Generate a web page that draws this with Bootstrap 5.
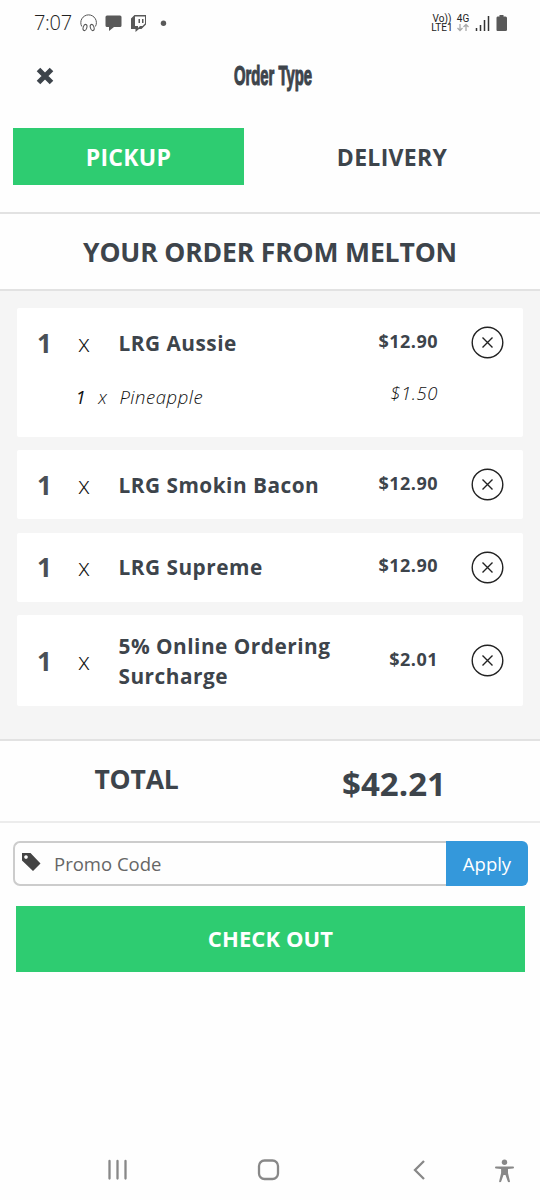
<!DOCTYPE html>
<html lang="en">
<head>
<meta charset="utf-8">
<meta name="viewport" content="width=device-width, initial-scale=1">
<title>Order Type</title>
<link href="https://cdn.jsdelivr.net/npm/bootstrap@5.3.0/dist/css/bootstrap.min.css" rel="stylesheet">
<style>
  body { font-family: "Open Sans", sans-serif; color: #3d444b; background: #fefefe; line-height: 30px; }
  .screen { height: 1200px; }
  .status { height: 45px; padding: 0 33px 0 34px; }
  .clock { font: 300 20px/45px "Open Sans", sans-serif; color: #222; width: 45px; letter-spacing: -.3px; }
  .volte { font: 400 10px/9px Roboto, sans-serif; color: #222; }
  .titlebar { height: 62px; padding-left: 36px; }
  .titlebar h1 { font: 700 27px/30px "Liberation Sans", sans-serif; width: 150px; transform: scaleX(.55); -webkit-text-stroke: 1.2px #3d444b; white-space: nowrap; padding-bottom: 1px; }
  .tabs { height: 107px; padding: 21px 13px 0; border-bottom: 2px solid #e2e2e2; }
  .tab { height: 57px; width: 231px; border-radius: 0; padding: 0; font-size: 23px; font-weight: 700; line-height: 58px; letter-spacing: .3px; color: #3d444b; border: 0; }
  .btn-go, .btn-go:hover { background: #2ecc71; color: #fff; }
  .shop { height: 77px; font-size: 26.5px; font-weight: 700; letter-spacing: -.15px; padding-top: 2px; border-bottom: 2px solid #e2e2e2; }
  .basket { height: 450px; padding: 17px 17px 0; background: #f5f5f5; border-bottom: 2px solid #e2e2e2; }
  .item { border: 0; border-radius: 2px; padding: 0 19.5px 0 20px; margin-bottom: 13.5px; height: 69px; }
  .item.tall { height: 91px; }
  .item.extras { height: 128.5px; }
  .line { height: 69px; }
  .tall .line { height: 91px; }
  .qty { width: 41px; font-size: 26px; font-weight: 700; color: #4a5056; }
  .times { width: 40.5px; font-size: 24px; font-weight: 300; color: #111; }
  .dish { font-size: 20.8px; font-weight: 700; letter-spacing: .5px; }
  .cost { font-size: 18px; font-weight: 700; letter-spacing: .5px; margin-right: 32.5px; padding-bottom: 4px; }
  .extra { font-size: 18.5px; font-style: italic; font-weight: 300; letter-spacing: .55px; color: #111; padding: 5px 65.500px 0 38.500px; }
  .sub { margin-top: -4px; }
  .total { height: 82px; border-bottom: 2px solid #ececec; }
  .sum-label { width: 273px; font-size: 26.5px; font-weight: 700; letter-spacing: -.2px; padding-bottom: 4px; }
  .sum-value { width: 242px; font-size: 33px; font-weight: 700; padding-top: 5px; }
  .promo { margin: 18px 12px 0 13px; height: 45px; }
  .promo .field { border: 2px solid #ccc; border-right: 0; border-radius: 7px 0 0 7px; padding-left: 7px; color: #666; font-size: 18.5px; }
  .promo-hint { margin-left: 12px; }
  .promo .apply { width: 82px; background: #3498db; color: #fff; border: 0; border-radius: 0 6px 6px 0; font-size: 18.5px; padding: 0; }
  .checkout { margin: 19.500px 15px 0 16px; height: 66px; border: 0; border-radius: 0; font-size: 22px; font-weight: 700; letter-spacing: .1px; }
  .softkeys { height: 60px; padding: 0 24px 0 107px; }
</style>
</head>
<body>
<main class="screen d-flex flex-column overflow-hidden">
  <div class="status d-flex align-items-center">
    <span class="clock">7:07</span>
    <svg width="92" height="22" viewBox="0 0 92 22">
      <g fill="none" stroke="#555" stroke-width="1">
        <path d="M2.800 14.500A7.800 7.800 0 1 1 16.400 14.500"/>
        <ellipse cx="6" cy="15.500" rx="1.800" ry="3.200" transform="rotate(18 6 15.500)"/>
        <ellipse cx="13.200" cy="15.500" rx="1.800" ry="3.200" transform="rotate(-18 13.200 15.500)"/>
      </g>
      <path d="M28 3.500h13q1.500 0 1.500 1.500v8.500q0 1.500-1.500 1.500h-6l-5 4v-4h-2q-1.500 0-1.500-1.500V5Q26.500 3.500 28 3.500z" fill="#595959"/>
      <path fill-rule="evenodd" d="M55.500 3H67v9.500L62.500 17H60l-3.500 3v-3H52V6.500zM56 4.500V14h3v2l2-2h2.500l2.500-2.500v-7zM59.500 7H61v4h-1.500zM63 7h1.500v4H63z" fill="#595959"/>
      <circle cx="84.500" cy="11.200" r="2.700" fill="#595959"/>
    </svg>
    <div class="volte ms-auto text-center" style="width:22px">Vo))<br>LTE1</div>
    <div class="volte text-center" style="width:20px">4G
      <svg class="d-block mx-auto" width="12" height="9" viewBox="0 0 12 9" fill="none" stroke="#aaa" stroke-width="1.300"><path d="M3 1v6M.5 5 3 7.500 5.500 5M9 8V2M6.500 4 9 1.500 11.500 4"/></svg>
    </div>
    <svg width="34" height="18" viewBox="0 0 34 18">
      <path d="M3.500 14v3M7.500 11v6M11.500 6v11M15.500 2v15" stroke="#333" stroke-width="1.500" fill="none"/>
      <path d="M26.500 1h4v1.500h2q1.500 0 1.500 1.500v12q0 1-1.500 1h-8q-1 0-1-1V4q0-1.500 1-1.500h2z" fill="#595959"/>
    </svg>
  </div>

  <header class="titlebar d-flex align-items-center">
    <svg width="18" height="18" viewBox="0 0 18 18" stroke="#3d444b" stroke-width="5"><path d="M2.500 2.500l13 13M15.500 2.500l-13 13"/></svg>
    <h1 class="mb-0 text-center" style="margin-left:144px">Order Type</h1>
  </header>

  <nav class="tabs d-flex justify-content-between">
    <button class="btn btn-go tab text-white">PICKUP</button>
    <button class="btn tab" style="width:270px">DELIVERY</button>
  </nav>

  <h2 class="shop mb-0 d-flex align-items-center justify-content-center">YOUR ORDER FROM MELTON</h2>

  <section class="basket">
    <article class="card item extras">
      <div class="line d-flex align-items-center">
        <span class="qty">1</span><span class="times">x</span><span class="dish flex-grow-1">LRG Aussie</span><span class="cost">$12.90</span>
        <svg width="33" height="33" viewBox="0 0 33 33" fill="none" stroke="#222" stroke-width="1.400"><circle cx="16.500" cy="16.500" r="15.300"/><path d="M11.500 11.500l10 10M21.500 11.500l-10 10"/></svg>
      </div>
      <div class="extra d-flex"><b>1</b><span class="ms-2 ps-1">x</span><span class="ms-2 ps-1 flex-grow-1">Pineapple</span><span class="sub">$1.50</span></div>
    </article>
    <article class="card item">
      <div class="line d-flex align-items-center">
        <span class="qty">1</span><span class="times">x</span><span class="dish flex-grow-1">LRG Smokin Bacon</span><span class="cost">$12.90</span>
        <svg width="33" height="33" viewBox="0 0 33 33" fill="none" stroke="#222" stroke-width="1.400"><circle cx="16.500" cy="16.500" r="15.300"/><path d="M11.500 11.500l10 10M21.500 11.500l-10 10"/></svg>
      </div>
    </article>
    <article class="card item">
      <div class="line d-flex align-items-center">
        <span class="qty">1</span><span class="times">x</span><span class="dish flex-grow-1">LRG Supreme</span><span class="cost">$12.90</span>
        <svg width="33" height="33" viewBox="0 0 33 33" fill="none" stroke="#222" stroke-width="1.400"><circle cx="16.500" cy="16.500" r="15.300"/><path d="M11.500 11.500l10 10M21.500 11.500l-10 10"/></svg>
      </div>
    </article>
    <article class="card item tall">
      <div class="line d-flex align-items-center">
        <span class="qty">1</span><span class="times">x</span><span class="dish flex-grow-1">5% Online Ordering<br>Surcharge</span><span class="cost">$2.01</span>
        <svg width="33" height="33" viewBox="0 0 33 33" fill="none" stroke="#222" stroke-width="1.400"><circle cx="16.500" cy="16.500" r="15.300"/><path d="M11.500 11.500l10 10M21.500 11.500l-10 10"/></svg>
      </div>
    </article>
  </section>

  <section class="total d-flex align-items-center text-center">
    <div class="sum-label">TOTAL</div>
    <div class="sum-value">$42.21</div>
  </section>

  <div class="promo d-flex">
    <div class="field flex-grow-1 d-flex align-items-center">
      <svg width="20" height="20" viewBox="0 0 20 20" style="margin-bottom:3px"><path fill-rule="evenodd" d="M0 1h8.500L18.500 11.500 11 19 0 8.500zM4 3.200a1.800 1.800 0 1 0 .01 0z" fill="#444"/></svg>
      <span class="promo-hint">Promo Code</span>
    </div>
    <button class="btn apply">Apply</button>
  </div>

  <button class="btn btn-go checkout">CHECK OUT</button>

  <footer class="softkeys mt-auto d-flex align-items-center">
    <svg width="409" height="28" viewBox="107 1156 409 28" fill="none" stroke="#888" stroke-width="2.300" stroke-linecap="round">
      <path d="M109.500 1161v17.500M117.500 1161v17.500M125.500 1161v17.500"/>
      <rect x="259" y="1160.500" width="19" height="18.500" rx="5.500"/>
      <path d="M424 1161l-9 9 9 9" stroke-linecap="butt"/>
      <g fill="#888" stroke="none"><circle cx="504.500" cy="1162.300" r="2.700"/><path d="M496 1166.500h17q1 0 1 1t-1 1l-5 .6v3.900l2 8.500q0 .8-1 .8t-1.200-.8l-2.300-6.500h-2l-2.300 6.500q-.3.800-1.200.8t-.9-.8l2-8.500v-3.900l-5.100-.6q-1 0-1-1t1-1z"/></g>
    </svg>
  </footer>
</main>
<script src="https://cdn.jsdelivr.net/npm/bootstrap@5.3.0/dist/js/bootstrap.bundle.min.js"></script>
</body>
</html>
